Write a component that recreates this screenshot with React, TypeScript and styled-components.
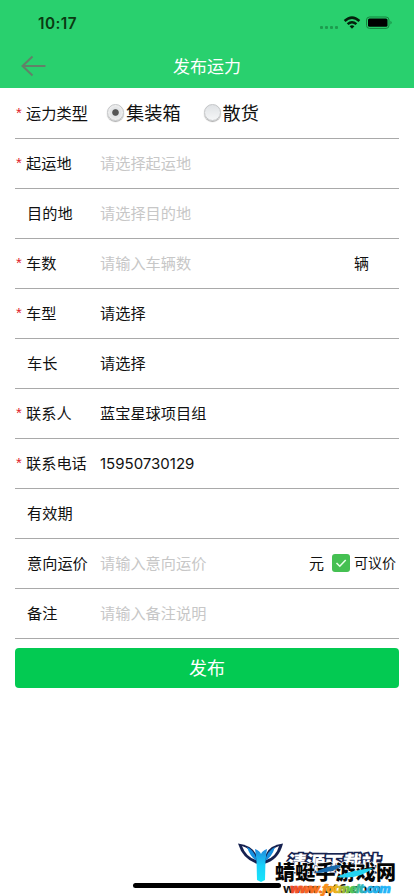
import React, { useState } from "react";
import styled, { createGlobalStyle } from "styled-components";

const GlobalStyle = createGlobalStyle`
  * { box-sizing: border-box; }
  html, body { margin: 0; background: #fff; overflow: hidden; }
  body { font-family: Inter, "Noto Sans CJK SC", sans-serif; color: #111; }
  button, input { font: inherit; color: inherit; }
`;

const Screen = styled.div`
  position: relative;
  width: 414px;
  height: 896px;
  overflow: hidden;
  background: #fff;
  display: flex;
  flex-direction: column;
`;

const Header = styled.header`
  height: 88px;
  flex: none;
  background: #29d06e;
`;

const StatusBar = styled.div`
  height: 44px;
  display: flex;
  align-items: center;
  justify-content: space-between;
  padding: 2px 16px 0 38px;
`;

const Clock = styled.span`
  font-size: 15.3px;
  font-weight: 600;
  letter-spacing: 0.45px;
  line-height: 18px;
  padding-top: 2px;
  color: #0a3a12;
`;

const StatusIcons = styled.svg`
  width: 82px;
  height: 16px;
  display: block;
`;

const NavBar = styled.div`
  height: 44px;
  display: grid;
  grid-template-columns: 60px 1fr 60px;
  align-items: center;
`;

const BackButton = styled.button`
  border: 0;
  padding: 0 0 0 20px;
  background: none;
  height: 44px;
  display: flex;
  align-items: center;
`;

const Title = styled.h1`
  margin: 0;
  padding-top: 2px;
  font-size: 17px;
  line-height: 42px;
  font-weight: 400;
  text-align: center;
  color: #fff;
`;

const Form = styled.form`
  padding: 1px 15px 0;
`;

const Row = styled.div`
  height: 50px;
  border-bottom: 1px solid #a9a9a9;
  display: flex;
  align-items: center;
  font-size: 15.2px;
  line-height: 24px;
  white-space: nowrap;
`;

const Label = styled.label<{ $required?: boolean }>`
  width: 85px;
  flex: none;
  display: flex;
  align-items: center;
  padding-left: ${(p) => (p.$required ? 0 : 12)}px;
`;

const Star = styled.span`
  width: 11px;
  padding-left: 1px;
  font-family: "Liberation Sans", sans-serif;
  font-size: 15px;
  line-height: 22px;
  height: 24px;
  color: #e0202a;
`;

const LastGlyph = styled.span`
  font-size: 16.5px;
`;

const Input = styled.input`
  flex: 1;
  min-width: 0;
  height: 30px;
  padding: 0;
  border: 0;
  outline: 0;
  background: none;
  &::placeholder { color: #c7c7c7; opacity: 1; }
`;

const Value = styled.span<{ $digits?: boolean }>`
  flex: 1;
  font-size: ${(p) => (p.$digits ? 15 : 15.2)}px;
`;

const Unit = styled.span<{ $gap: number }>`
  font-size: 15px;
  margin-right: ${(p) => p.$gap}px;
`;

const Choices = styled.div`
  display: flex;
  gap: 23px;
  padding: 0 0 2px 7px;
`;

const Choice = styled.button`
  display: flex;
  align-items: center;
  gap: 2px;
  border: 0;
  padding: 0;
  background: none;
  font-size: 18.2px;
  line-height: 26px;
`;

const RadioMark = styled.span<{ $on: boolean }>`
  width: 17px;
  height: 17px;
  border-radius: 50%;
  border: 1px solid #c3c5c7;
  box-shadow: 0 1px 1px #aaa;
  background: ${(p) =>
    p.$on
      ? "radial-gradient(circle, #555 0 2.8px, #e3e5e7 3.8px 5px, #eee 7px)"
      : "linear-gradient(#dfe2e5, #f5f6f7)"};
`;

const Negotiable = styled.button`
  display: flex;
  align-items: center;
  gap: 4px;
  border: 0;
  padding: 0 3px 1px 0;
  background: none;
  font-size: 14px;
`;

const CheckMark = styled.span`
  width: 18px;
  height: 18px;
  border-radius: 3px;
  background: #45c052;
  display: flex;
`;

const Submit = styled.button`
  display: block;
  width: 384px;
  height: 40px;
  margin-top: 9px;
  padding: 0;
  border: 0;
  border-radius: 4px;
  background: #03ca52;
  color: #fff;
  font-size: 18px;
  line-height: 41px;
`;

const HomeBar = styled.div`
  position: absolute;
  left: 133px;
  bottom: 8px;
  width: 148px;
  height: 5px;
  border-radius: 3px;
  background: #000;
`;

const Watermark = styled.svg`
  position: absolute;
  right: 0;
  bottom: 0;
  width: 189px;
  height: 66px;
`;

type Field = {
  label: string;
  required?: boolean;
  placeholder?: string;
  value?: string;
  digits?: boolean;
  unit?: string;
};

const fields: Field[] = [
  { label: "起运地", required: true, placeholder: "请选择起运地" },
  { label: "目的地", placeholder: "请选择目的地" },
  { label: "车数", required: true, placeholder: "请输入车辆数", unit: "辆" },
  { label: "车型", required: true, value: "请选择" },
  { label: "车长", value: "请选择" },
  { label: "联系人", required: true, value: "蓝宝星球项目组" },
  { label: "联系电话", required: true, value: "15950730129", digits: true },
  { label: "有效期" },
];

function FieldRow({ field }: { field: Field }) {
  return (
    <Row>
      <Label $required={field.required}>
        {field.required && <Star>*</Star>}
        {field.label}
      </Label>
      {field.placeholder ? (
        <Input placeholder={field.placeholder} />
      ) : (
        <Value $digits={field.digits}>{field.value}</Value>
      )}
      {field.unit && <Unit $gap={30}>{field.unit}</Unit>}
    </Row>
  );
}

function SiteMark() {
  return (
    <Watermark viewBox="225 830 189 66">
      <defs>
        <linearGradient id="wing" x1="0" y1="0" x2="0" y2="1">
          <stop offset="0" stopColor="#2189dc" />
          <stop offset="0.5" stopColor="#19d0fa" />
          <stop offset="1" stopColor="#19e6fa" />
        </linearGradient>
        <linearGradient id="url" x1="0" y1="0" x2="1" y2="0">
          <stop offset="0" stopColor="#f0442a" />
          <stop offset="0.3" stopColor="#fb7b1c" />
          <stop offset="0.45" stopColor="#f4b51c" />
          <stop offset="0.6" stopColor="#55c54a" />
          <stop offset="0.75" stopColor="#22aee0" />
          <stop offset="1" stopColor="#25b5fe" />
        </linearGradient>
      </defs>
      <path d="M238 843.5 Q251 845 256 854 L258 864 Q243 860 238 843.5Z" fill="#15204f" />
      <path d="M283 843.5 Q270 845 266 854 L264 864 Q279 860 283 843.5Z" fill="#15204f" />
      <path d="M242 846 Q251 848 256 860 Q246 857 242 846Z M279 846 Q271 848 266 860 Q276 857 279 846Z" fill="#fff" />
      <path d="M247 847 Q255 851 257 861 Q250 857 247 847Z M275 847 Q267 851 265 861 Q272 857 275 847Z" fill="#168fe0" />
      <path d="M255 849 Q260 851 261 854 Q262 851 267 849 L265.5 860 L265 880 L261 882 L257 880 L256.5 860Z" fill="url(#wing)" />
      <g transform="translate(287 870) skewX(-6)">
        <text x="0" y="0" fontFamily='"Noto Sans CJK SC", sans-serif' fontSize="19.5" fontWeight="900" textLength="93" fill="#fff" stroke="#17234f" strokeWidth="3.4" paintOrder="stroke">清源下载站</text>
      </g>
      <text x="275" y="880" fontFamily='"Noto Sans CJK SC", sans-serif' fontSize="20" fontWeight="900" textLength="121" fill="#050505" stroke="#fff" strokeWidth="1.2" paintOrder="stroke">蜻蜓手游戏网</text>
      <path d="M315 873 Q326 865 342 865 Q334 873 315 873Z" fill="#1769ac" />
      <path d="M337 877 Q347 871 373 868 Q359 880 337 877Z" fill="#24d3f1" />
      <text x="283" y="892.5" fontFamily='"Open Sans", sans-serif' fontSize="13" fontWeight="700" textLength="98" fill="#111">www.qt6.com</text>
      <text x="290" y="892.5" fontFamily='"Open Sans", sans-serif' fontSize="13" fontWeight="800" fontStyle="italic" textLength="101" fill="url(#url)" stroke="url(#url)" strokeWidth="0.5">www.fotmeit.com</text>
    </Watermark>
  );
}

export default function App() {
  const [kind, setKind] = useState("集装箱");
  const [open, setOpen] = useState(true);
  return (
    <>
      <GlobalStyle />
      <Screen>
        <Header>
          <StatusBar>
            <Clock>10:17</Clock>
            <StatusIcons viewBox="0 0 82 16">
              <g fill="#1c9c4e">
                <rect x="4" y="11" width="3" height="3" rx="1" />
                <rect x="9" y="11" width="3" height="3" rx="1" />
                <rect x="14" y="11" width="3" height="3" rx="1" />
                <rect x="19" y="11" width="3" height="3" rx="1" />
              </g>
              <g fill="none" stroke="#04200c" strokeWidth="2.5">
                <path d="M28.6 6 Q36 -0.8 43.4 6" />
                <path d="M31.6 9.2 Q36 5.2 40.4 9.2" />
              </g>
              <path d="M33.6 11.3 Q36 9.4 38.4 11.3 L36 13.8Z" fill="#04200c" />
              <rect x="50.5" y="2" width="22.5" height="11.4" rx="3" fill="none" stroke="#15833d" />
              <rect x="52" y="3.6" width="19.5" height="8.2" rx="1.5" fill="#000" />
              <path d="M74.5 5.8 Q76.8 7.7 74.5 9.6Z" fill="#15833d" />
            </StatusIcons>
          </StatusBar>
          <NavBar>
            <BackButton aria-label="返回">
              <svg width="27" height="22" viewBox="0 0 27 22" fill="none" stroke="#628168" strokeWidth="2">
                <path d="M25.5 11H2.5M12.5 1.5L2.5 11L12.5 20.5" />
              </svg>
            </BackButton>
            <Title>发布运力</Title>
          </NavBar>
        </Header>
        <Form onSubmit={(e) => e.preventDefault()}>
          <Row>
            <Label $required>
              <Star>*</Star>运力类<LastGlyph>型</LastGlyph>
            </Label>
            <Choices>
              {["集装箱", "散货"].map((name) => (
                <Choice key={name} type="button" onClick={() => setKind(name)}>
                  <RadioMark $on={kind === name} />
                  {name}
                </Choice>
              ))}
            </Choices>
          </Row>
          {fields.map((f) => (
            <FieldRow key={f.label} field={f} />
          ))}
          <Row>
            <Label>意向运价</Label>
            <Input placeholder="请输入意向运价" />
            <Unit $gap={8}>元</Unit>
            <Negotiable type="button" onClick={() => setOpen(!open)}>
              <CheckMark>
                {open && (
                  <svg width="18" height="18" viewBox="0 0 18 18" fill="none" stroke="#e9ffe9" strokeWidth="1.6">
                    <path d="M4.5 9L7.8 12.2L13.7 6" />
                  </svg>
                )}
              </CheckMark>
              可议价
            </Negotiable>
          </Row>
          <Row>
            <Label>备注</Label>
            <Input placeholder="请输入备注说明" />
          </Row>
          <Submit>发布</Submit>
        </Form>
        <HomeBar />
        <SiteMark />
      </Screen>
    </>
  );
}
